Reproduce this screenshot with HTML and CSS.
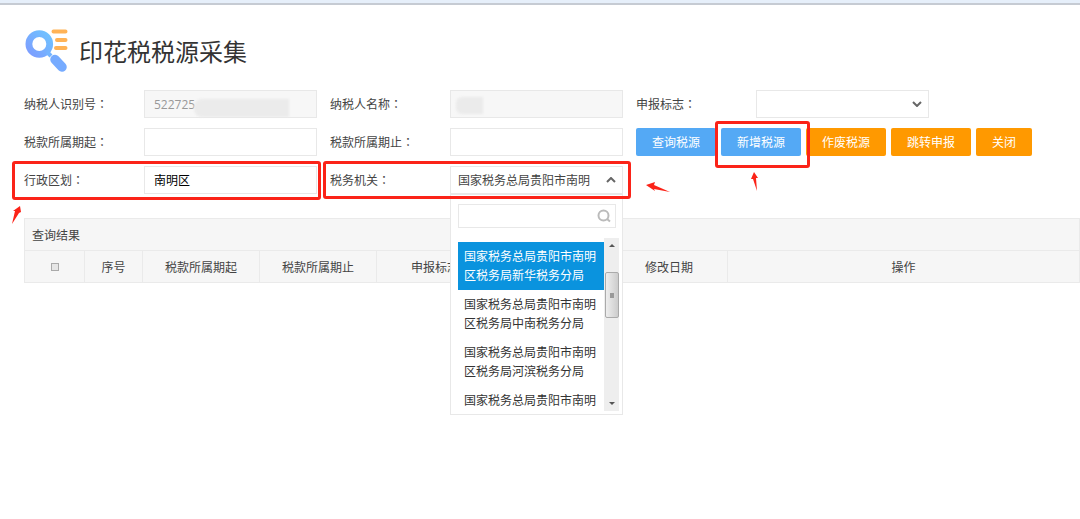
FILE: index.html
```
<!DOCTYPE html>
<html lang="zh-CN">
<head>
  <meta charset="utf-8">
  <title>印花税税源采集</title>
  <link rel="stylesheet" href="styles.css">
</head>
<body>
<div class="topbar"></div>

<header class="header">
  <svg class="logo" viewBox="0 0 44 46" aria-hidden="true">
    <defs>
      <linearGradient id="lens" x1="1" y1="0" x2="0" y2="1">
        <stop offset="0" stop-color="#6fc3ff"/>
        <stop offset="1" stop-color="#7d9dff"/>
      </linearGradient>
    </defs>
    <circle cx="15.300" cy="18" r="10.400" fill="none" stroke="url(#lens)" stroke-width="6.800"/>
    <path d="M23 26l4 4" stroke="#74b4ff" stroke-width="4"/>
    <path d="M31 33.500l7 7.500" stroke="#76abff" stroke-width="9.500" stroke-linecap="round"/>
    <path d="M29.500 5.500h12M33 14h8.500M32 22h9.500" stroke="#ffb356" stroke-width="4" stroke-linecap="round"/>
  </svg>
  <h1 class="title">印花税税源采集</h1>
</header>

<form class="form">
  <div class="field">
    <label for="nsrsbh">纳税人识别号<span class="colon" lang="zh-TW">：</span></label>
    <div class="control">
      <input class="box" type="text" id="nsrsbh" value="522725" disabled>
      <span class="mask mask-long"></span>
    </div>
  </div>
  <div class="field">
    <label for="nsrmc">纳税人名称<span class="colon" lang="zh-TW">：</span></label>
    <div class="control">
      <input class="box" type="text" id="nsrmc" disabled>
      <span class="mask mask-short"></span>
    </div>
  </div>
  <div class="field">
    <label for="sbbz">申报标志<span class="colon" lang="zh-TW">：</span></label>
    <div class="control">
      <select class="box" id="sbbz"><option></option></select>
      <svg class="chevron" viewBox="0 0 10 6" aria-hidden="true"><path d="M1 1l4 4 4-4"/></svg>
    </div>
  </div>

  <div class="field">
    <label for="ssqq">税款所属期起<span class="colon" lang="zh-TW">：</span></label>
    <div class="control"><input class="box" type="text" id="ssqq"></div>
  </div>
  <div class="field">
    <label for="ssqz">税款所属期止<span class="colon" lang="zh-TW">：</span></label>
    <div class="control"><input class="box" type="text" id="ssqz"></div>
  </div>
  <div class="buttons">
    <button class="btn blue" type="button">查询税源</button>
    <button class="btn blue" type="button">新增税源</button>
    <button class="btn orange" type="button">作废税源</button>
    <button class="btn orange" type="button">跳转申报</button>
    <button class="btn orange" type="button">关闭</button>
  </div>

  <div class="field">
    <label for="xzqh">行政区划<span class="colon" lang="zh-TW">：</span></label>
    <div class="control"><input class="box dark" type="text" id="xzqh" value="南明区"></div>
  </div>
  <div class="field">
    <label for="swjg">税务机关<span class="colon" lang="zh-TW">：</span></label>
    <div class="control">
      <select class="box" id="swjg"><option>国家税务总局贵阳市南明</option></select>
      <svg class="chevron" viewBox="0 0 10 6" aria-hidden="true"><path d="M1 5l4-4 4 4"/></svg>
      <div class="dropdown">
        <div class="search">
          <input type="text" class="search-input" aria-label="搜索">
          <svg class="search-icon" viewBox="0 0 14 14" aria-hidden="true"><circle cx="6.500" cy="6.500" r="5"/><path d="M10 10l3 2.500"/></svg>
        </div>
        <div class="list">
          <ul class="options" role="listbox" aria-label="税务机关">
            <li class="option active" role="option" aria-selected="true">国家税务总局贵阳市南明区税务局新华税务分局</li>
            <li class="option" role="option">国家税务总局贵阳市南明区税务局中南税务分局</li>
            <li class="option" role="option">国家税务总局贵阳市南明区税务局河滨税务分局</li>
            <li class="option" role="option">国家税务总局贵阳市南明</li>
          </ul>
          <div class="scrollbar">
            <span class="arrow up"></span>
            <span class="thumb"></span>
            <span class="arrow down"></span>
          </div>
        </div>
      </div>
    </div>
  </div>
</form>

<table class="result">
  <colgroup>
    <col class="c-check"><col class="c-no"><col class="c-mid"><col class="c-mid">
    <col class="c-mid"><col class="c-mid"><col class="c-mid"><col>
  </colgroup>
  <thead>
    <tr><th class="result-title" colspan="8">查询结果</th></tr>
    <tr>
      <th><input class="check" type="checkbox" aria-label="全选"></th>
      <th>序号</th>
      <th>税款所属期起</th>
      <th>税款所属期止</th>
      <th>申报标志</th>
      <th></th>
      <th>修改日期</th>
      <th>操作</th>
    </tr>
  </thead>
</table>

<!-- step marks -->
<div class="mark mark-area"></div>
<div class="mark mark-office"></div>
<div class="mark mark-add"></div>
<svg class="pointer pointer-area" viewBox="0 0 10 18" aria-hidden="true"><path d="M0 18L3 5 1 5 8 0 9 6 7 7z"/></svg>
<svg class="pointer pointer-office" viewBox="0 0 24 11" aria-hidden="true"><path d="M0 3L9 0 8 3 24 10 8 7 9 9z"/></svg>
<svg class="pointer pointer-add" viewBox="0 0 8 19" aria-hidden="true"><path d="M3 0L7 6 5 6 6 19 2 7 0 7z"/></svg>
</body>
</html>
```

FILE: styles.css
```
* {
  box-sizing: border-box;
}
body {
  margin: 0;
  position: relative;
  min-height: 100vh;
  background: #fff;
  color: #444;
  font-family: "Open Sans", "Noto Sans CJK SC", sans-serif;
  font-size: 12px;
}
button, input, select {
  font-family: inherit;
  font-size: 12px;
}
.topbar {
  height: 5px;
  background: #e6effa;
  border-bottom: 2px solid #c6cbd3;
}
.header {
  display: flex;
  align-items: flex-end;
  gap: 11px;
  padding: 21px 24px 0;
}
.logo {
  width: 44px;
  height: 46px;
}
.title {
  margin: 0;
  font-size: 24px;
  line-height: 40px;
  font-weight: normal;
  color: #333;
}

/* query form */
.form {
  display: grid;
  grid-template-columns: 294px 294px 1fr;
  grid-auto-rows: 28px;
  gap: 10px 12px;
  padding: 18px 24px 0;
}
.field {
  display: flex;
  align-items: center;
}
.field label {
  width: 120px;
}
.colon {
  font-family: "Noto Sans CJK TC", sans-serif;
}
.control {
  position: relative;
  width: 173px;
}
.box {
  display: block;
  width: 100%;
  height: 28px;
  padding: 0 9px;
  border: 1px solid #e8e8e8;
  border-radius: 0;
  background: #fff;
  color: #444;
  appearance: none;
}
.box:disabled {
  background: #f7f7f7;
  color: #999;
  opacity: 1;
}
select.box {
  padding: 0 7px;
}
.dark {
  color: #000;
}
.mask {
  position: absolute;
  background: #ebebeb;
  filter: blur(1px);
}
.mask-long {
  left: 50px;
  top: 9px;
  width: 95px;
  height: 18px;
  border-radius: 8px 0 0 8px;
}
.mask-short {
  left: 6px;
  top: 7px;
  width: 27px;
  height: 17px;
  border-radius: 6px 0 0 6px;
}
.chevron {
  position: absolute;
  right: 7px;
  top: 11px;
  width: 10px;
  height: 6px;
  fill: none;
  stroke: #666;
  stroke-width: 2;
  pointer-events: none;
}
.buttons {
  display: flex;
  gap: 5px;
}
.btn {
  height: 28px;
  padding: 0 15px;
  border: 1px solid transparent;
  border-radius: 2px;
  color: #fff;
  white-space: nowrap;
  cursor: pointer;
}
.blue {
  background: #54a9f5;
}
.orange {
  background: #ff9900;
}

/* open list */
.dropdown {
  position: absolute;
  left: 0;
  top: 28px;
  width: 100%;
  padding: 9px 3px 3px 7px;
  border: 1px solid #e8e8e8;
  background: #fff;
  z-index: 2;
}
.search {
  position: relative;
  margin-right: 3px;
}
.search-input {
  display: block;
  width: 100%;
  height: 24px;
  padding: 0 22px 0 6px;
  border: 1px solid #e8e8e8;
}
.search-icon {
  position: absolute;
  right: 5px;
  top: 5px;
  width: 14px;
  height: 14px;
  fill: none;
  stroke: #bbb;
  stroke-width: 2;
}
.list {
  display: flex;
  height: 173px;
  margin-top: 10px;
}
.options {
  flex: 1;
  margin: 0;
  padding: 4px 0 0;
  list-style: none;
  overflow: hidden;
}
.option {
  padding: 5px 6px;
  line-height: 19px;
  color: #333;
}
.active {
  background: #0a93de;
  color: #fff;
}
.scrollbar {
  display: flex;
  flex-direction: column;
  align-items: center;
  width: 15px;
  padding: 6px 0;
  background: #eee;
}
.arrow {
  border: 3px solid transparent;
}
.up {
  border-top: 0;
  border-bottom-color: #555;
}
.down {
  margin-top: auto;
  border-bottom: 0;
  border-top-color: #555;
}
.thumb {
  display: flex;
  align-items: center;
  justify-content: center;
  width: 14px;
  height: 46px;
  margin-top: 25px;
  border: 1px solid #aaa;
  border-radius: 2px;
  background: linear-gradient(to right, #eee, #ccc);
}
.thumb::after {
  content: "";
  width: 4px;
  height: 5px;
  background: #999;
}

/* result table */
.result {
  width: calc(100% - 24px);
  margin: 24px 0 0 24px;
  border-collapse: collapse;
  table-layout: fixed;
}
.result th {
  height: 32px;
  padding: 0;
  border: 1px solid #eaeaea;
  background: #f6f6f6;
  font-weight: normal;
  text-align: center;
}
.result .result-title {
  padding-left: 7px;
  text-align: left;
}
.c-check {
  width: 60px;
}
.c-no {
  width: 58px;
}
.c-mid {
  width: 117px;
}
.check {
  appearance: none;
  display: block;
  width: 8px;
  height: 8px;
  margin: 0 auto;
  border: 1px solid #aaa;
  background: #e6e6e6;
}

/* red marks over the page */
.mark {
  position: absolute;
  border: 3px solid #fb2318;
  border-radius: 3px;
  pointer-events: none;
  z-index: 3;
}
.mark-area {
  left: 12px;
  top: 161px;
  width: 309px;
  height: 39px;
}
.mark-office {
  left: 323px;
  top: 161px;
  width: 308px;
  height: 38px;
}
.mark-add {
  left: 715px;
  top: 121px;
  width: 95px;
  height: 47px;
}
.pointer {
  position: absolute;
  fill: #fb2318;
}
.pointer-area {
  left: 12px;
  top: 206px;
  width: 10px;
  height: 18px;
}
.pointer-office {
  left: 646px;
  top: 182px;
  width: 24px;
  height: 11px;
}
.pointer-add {
  left: 751px;
  top: 172px;
  width: 8px;
  height: 19px;
}
```
